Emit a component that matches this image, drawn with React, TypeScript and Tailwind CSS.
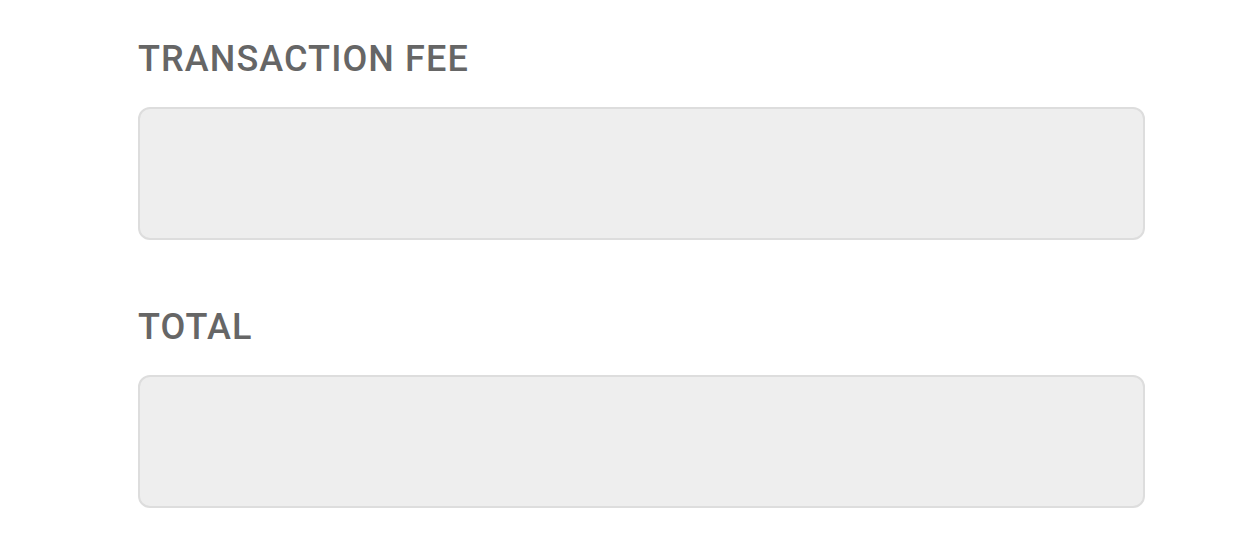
export default function App() {
  const fields = ["TRANSACTION FEE", "TOTAL"]

  return (
    <div className="w-[1242px] h-[544px] overflow-hidden bg-white font-['Roboto',sans-serif]">
      <div className="pl-[138px] pr-[97px] pt-[41px]">
        {fields.map((label, index) => (
          <div key={label} className={index > 0 ? "mt-[69px]" : ""}>
            <div className="h-[36px] text-[36px] leading-[36px] font-medium tracking-[1.1px] text-[#666666]">
              {label}
            </div>
            <div className="mt-[30px] h-[133px] rounded-[12px] border-2 border-[#dddddd] bg-[#eeeeee]" />
          </div>
        ))}
      </div>
    </div>
  )
}
